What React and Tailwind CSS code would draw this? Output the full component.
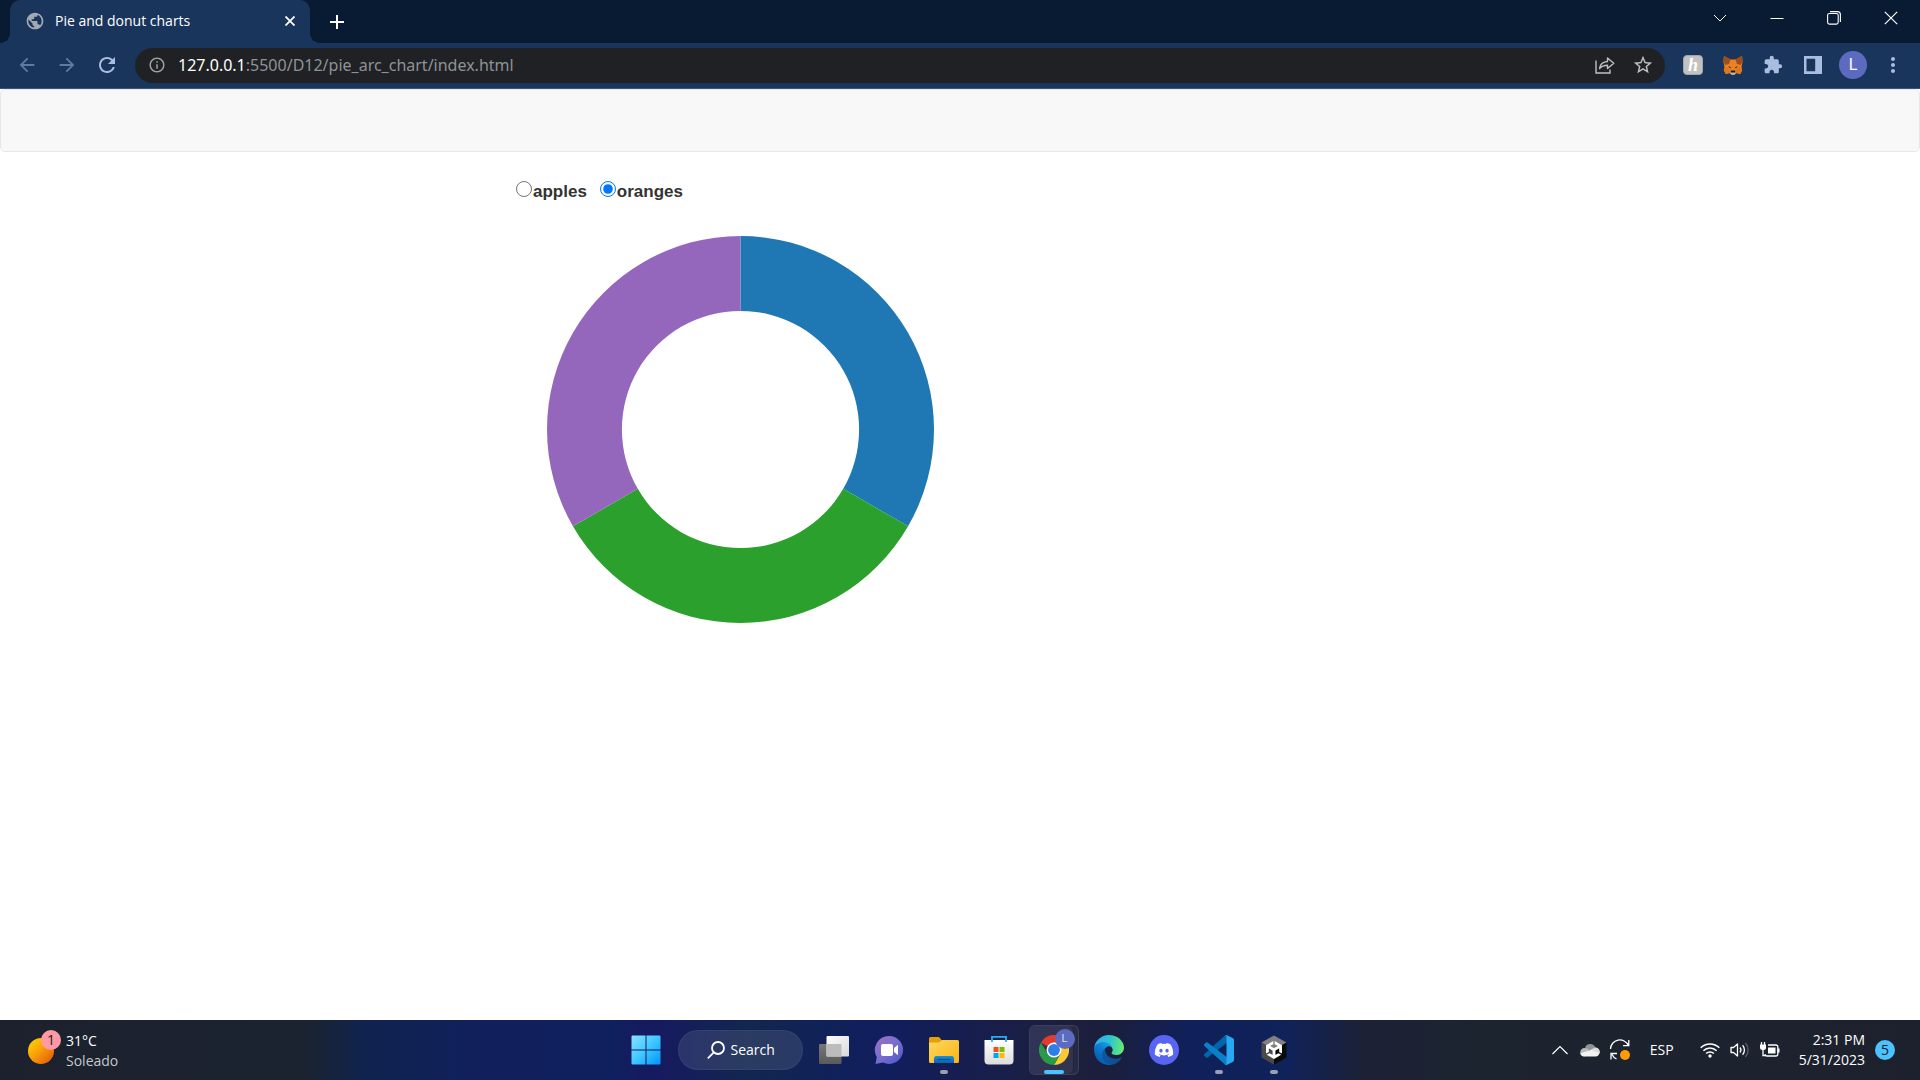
import { useState } from "react";
import {
  MdPublic,
  MdInfoOutline,
  MdStarBorder,
  MdExtension,
  MdMoreVert,
  MdRefresh,
  MdArrowBack,
  MdArrowForward,
  MdAdd,
} from "react-icons/md";
import { FaDiscord } from "react-icons/fa";
import { SiUnity } from "react-icons/si";

const UI_FONT = "font-['Open_Sans','Noto_Sans',sans-serif]";

function TabStrip() {
  return (
    <div className="flex h-[43px] items-end bg-[#091a33]">
      <span className="h-[10px] w-[10px] bg-[radial-gradient(circle_at_0_0,transparent_10px,#1a355c_10px)]" />
      <div className="flex h-full w-[300px] items-center rounded-t-[10px] bg-[#1a355c] pb-[2px] pl-[15px] pr-[10px] text-white">
        <MdPublic className="h-5 w-5 shrink-0 text-[#a3a9b2]" />
        <span className="ml-[10px] flex-1 truncate text-[14px] leading-5">Pie and donut charts</span>
        <button aria-label="Close tab" className="flex h-5 w-5 items-center justify-center">
          <svg viewBox="0 0 10 10" className="h-[10px] w-[10px]" fill="none" stroke="currentColor" strokeWidth="1.8">
            <path d="M.5.5l9 9M9.5.5l-9 9" />
          </svg>
        </button>
      </div>
      <span className="h-[10px] w-[10px] bg-[radial-gradient(circle_at_100%_0,transparent_10px,#1a355c_10px)]" />
      <button aria-label="New tab" className="ml-[6px] flex h-[43px] w-[22px] items-center justify-center text-white">
        <MdAdd className="h-6 w-6 shrink-0" />
      </button>
      <div className="ml-auto flex self-start pr-px text-white">
        <button aria-label="Search tabs" className="flex h-9 w-[57px] items-center justify-center">
          <svg viewBox="0 0 14 14" className="h-[14px] w-[14px]" fill="none" stroke="currentColor" strokeWidth="1">
            <path d="M1 4l6 6 6-6" />
          </svg>
        </button>
        <button aria-label="Minimize" className="flex h-9 w-[57px] items-center justify-center">
          <svg viewBox="0 0 14 14" className="h-[14px] w-[14px]" fill="none" stroke="currentColor" strokeWidth="1">
            <path d="M0.5 7.5h13" />
          </svg>
        </button>
        <button aria-label="Restore" className="flex h-9 w-[57px] items-center justify-center">
          <svg viewBox="0 0 14 14" className="h-[14px] w-[14px]" fill="none" stroke="currentColor" strokeWidth="1.1">
            <rect x="0.6" y="2.5" width="10.6" height="10.6" rx="1.8" />
            <path d="M3 0.6h7.4a3 3 0 0 1 3 3v7.4" />
          </svg>
        </button>
        <button aria-label="Close" className="flex h-9 w-[57px] items-center justify-center">
          <svg viewBox="0 0 14 14" className="h-[14px] w-[14px]" fill="none" stroke="currentColor" strokeWidth="1.2">
            <path d="M0.8 0.8l12.4 12.4M13.2 0.8L0.8 13.2" />
          </svg>
        </button>
      </div>
    </div>
  );
}

function FoxIcon() {
  return (
    <svg viewBox="0 0 20 20" className="h-5 w-5">
      <path d="M1 1l6.5 3.5h5L19 1l.6 5.5-1.1 5.5.7 3-1.8 4-4.4-1-1.6 1.4H8.6L7 18l-4.400 1-1.800-4 .7-3L.4 6.500z" fill="#f0801f" />
      <path d="M1 1l6.500 3.800-1.500 4.200-3.800 1L.5 6.500zM19 1l-6.500 3.800 1.500 4.200 3.800 1 1.700-3.500z" fill="#9a4f1c" />
      <path d="M.8 15l2.800-3.200 3 2.700L7 18l-4.400 1zM19.200 15l-2.800-3.200-3 2.700L13 18l4.400 1z" fill="#e2761b" />
      <path d="M5 11l3 1.300-.8 1.200zM15 11l-3 1.300.8 1.200z" fill="#233447" />
      <path d="M7 16l1.600-.6h2.800l1.600.6-.3 2.600-1.200 1.200h-3l-1.200-1.200z" fill="#c9b9aa" />
      <path d="M7.800 15.600h4.400l.3 1.800H7.500z" fill="#1c1a1a" />
    </svg>
  );
}

function Toolbar() {
  return (
    <div className="flex h-[46px] items-center border-b border-[#3d5476] bg-[#1a355c] px-[7px] pb-px text-[#a9bde0]">
      <button aria-label="Back" className="flex h-9 w-10 items-center justify-center text-[#5f7aa3]">
        <MdArrowBack className="h-[22px] w-[22px]" />
      </button>
      <button aria-label="Forward" className="flex h-9 w-10 items-center justify-center text-[#5f7aa3]">
        <MdArrowForward className="h-[22px] w-[22px]" />
      </button>
      <button aria-label="Reload" className="flex h-9 w-10 items-center justify-center">
        <MdRefresh className="h-6 w-6" />
      </button>
      <div className="ml-2 flex h-[35px] flex-1 items-center rounded-full bg-[#202124] pl-[13px] pr-1 text-[#bdc1c6]">
        <MdInfoOutline className="h-[18px] w-[18px] shrink-0 text-[#9aa0a6]" />
        <a href="#index" className="ml-3 flex-1 truncate font-['Noto_Sans','Open_Sans',sans-serif] text-[16px] leading-6 text-[#8f9398]">
          <span className="text-white">127.0.0.1</span>:5500/D12/pie_arc_chart/index.html
        </a>
        <button aria-label="Share this page" className="flex h-8 w-10 items-center justify-center">
          <svg viewBox="0 0 20 18" className="h-[18px] w-5" fill="none" stroke="currentColor" strokeWidth="1.4">
            <path d="M1 4.500v12.500h14v-3.500" />
            <path d="M4.500 12.500c.6-4.200 3.300-6.700 8-7V2l6.300 5.300-6.300 5.200V9.200c-3.500 0-6 .9-8 3.300z" strokeLinejoin="round" />
          </svg>
        </button>
        <button aria-label="Bookmark this page" className="flex h-8 w-9 items-center justify-center">
          <MdStarBorder className="h-[22px] w-[22px]" />
        </button>
      </div>
      <div className="ml-2 flex">
        <button aria-label="Honey" className="flex h-8 w-10 items-center justify-center">
          <span className="flex h-5 w-5 items-center justify-center rounded-[4px] border border-[#a5a5a5] bg-[#c2c2c2] font-['Liberation_Serif',serif] text-[18px] font-bold italic leading-[18px] text-white">
            h
          </span>
        </button>
        <button aria-label="MetaMask" className="flex h-8 w-10 items-center justify-center">
          <FoxIcon />
        </button>
        <button aria-label="Extensions" className="flex h-8 w-10 items-center justify-center">
          <MdExtension className="h-5 w-5" />
        </button>
        <button aria-label="Side panel" className="flex h-8 w-10 items-center justify-center">
          <svg viewBox="0 0 18 18" className="h-[18px] w-[18px]" fill="currentColor">
            <path fillRule="evenodd" d="M0 0h18v18H0zM2.500 2.800v12.400h8.700V2.800z" />
          </svg>
        </button>
        <button aria-label="Profile" className="flex h-8 w-10 items-center justify-center">
          <span className="flex h-7 w-7 items-center justify-center rounded-full bg-[#5c6bc0] font-[Roboto,sans-serif] text-[16px] leading-5 text-white">
            L
          </span>
        </button>
        <button aria-label="Menu" className="flex h-8 w-10 items-center justify-center">
          <MdMoreVert className="h-6 w-6" />
        </button>
      </div>
    </div>
  );
}

const COLORS = ["#1f77b4", "#2ca02c", "#9467bd"];
const DATA = { apples: [2, 1, 3], oranges: [1, 1, 1] };
const OUTER = 155;
const INNER = 95;

function arcPath(start, end) {
  const at = (angle, r) => `${r * Math.sin(angle)} ${-r * Math.cos(angle)}`;
  const large = end - start > Math.PI ? 1 : 0;
  return `M${at(start, OUTER)}A${OUTER} ${OUTER} 0 ${large} 1 ${at(end, OUTER)}L${at(end, INNER)}A${INNER} ${INNER} 0 ${large} 0 ${at(start, INNER)}Z`;
}

function Donut({ values }) {
  const total = values.reduce((a, b) => a + b, 0);
  let angle = 0;
  return (
    <svg viewBox="-155 -155 310 310" className="ml-[31px] mt-8 h-auto w-[387px]" role="img" aria-label="Donut chart">
      {values.map((v, i) => {
        const start = angle;
        angle += (v / total) * 2 * Math.PI;
        return <path key={i} d={arcPath(start, angle)} fill={COLORS[i]} />;
      })}
    </svg>
  );
}

function Page() {
  const [fruit, setFruit] = useState("oranges");
  return (
    <main className="flex-1 bg-white">
      <nav className="h-[63px] rounded-[5px] border border-[#e7e7e7] bg-[#f8f8f8]" />
      <div className="mx-auto w-full max-w-[888px] pt-[27px]">
        <form className="flex gap-[13px] font-['Liberation_Sans',Arial,sans-serif] text-[17px] font-bold leading-[25px] text-[#333]">
          {Object.keys(DATA).map((name) => (
            <label key={name} className="flex items-start gap-px">
              <input
                type="radio"
                name="fruit"
                value={name}
                checked={fruit === name}
                onChange={() => setFruit(name)}
                className="mt-[2px] h-4 w-4"
              />
              {name}
            </label>
          ))}
        </form>
        <Donut values={DATA[fruit]} />
      </div>
    </main>
  );
}

function StartIcon() {
  return (
    <svg viewBox="0 0 30 30" className="h-[30px] w-[30px]">
      <defs>
        <linearGradient id="win" x1="0" y1="0" x2="30" y2="30" gradientUnits="userSpaceOnUse">
          <stop offset="0" stopColor="#8be3ff" />
          <stop offset=".5" stopColor="#3fc8ff" />
          <stop offset="1" stopColor="#0091ff" />
        </linearGradient>
      </defs>
      <path fill="url(#win)" d="M1.500.5h13v14H.5v-13a1 1 0 0 1 1-1zM15.500.5h13a1 1 0 0 1 1 1v13h-14zM.5 15.500h14v14h-13a1 1 0 0 1-1-1zM15.500 15.500h14v13a1 1 0 0 1-1 1h-13z" />
    </svg>
  );
}

function TaskViewIcon() {
  return (
    <svg viewBox="0 0 30 28" className="h-7 w-[30px]">
      <defs>
        <linearGradient id="tv1" x1="0" y1="0" x2="1" y2="1">
          <stop offset="0" stopColor="#fff" />
          <stop offset="1" stopColor="#d9d9d9" />
        </linearGradient>
        <linearGradient id="tv2" x1="0" y1="0" x2="0" y2="1">
          <stop offset="0" stopColor="#777" />
          <stop offset="1" stopColor="#5a5a5a" />
        </linearGradient>
      </defs>
      <rect x="0" y="8" width="22.500" height="20" rx="1" fill="url(#tv2)" />
      <rect x="7.500" y="0" width="22.500" height="20.500" rx="1" fill="url(#tv1)" />
      <rect x="7.500" y="8" width="15" height="12.500" fill="#bcbcbc" />
    </svg>
  );
}

function ChatIcon() {
  return (
    <svg viewBox="0 0 30 30" className="h-[30px] w-[30px]">
      <defs>
        <linearGradient id="chat" x1="0" y1="0" x2="1" y2="1">
          <stop offset="0" stopColor="#a070b8" />
          <stop offset=".45" stopColor="#7a6fd0" />
          <stop offset="1" stopColor="#4c55c8" />
        </linearGradient>
      </defs>
      <path d="M15 1a14 14 0 1 1-6 26.600L1.500 29l1.300-7A14 14 0 0 1 15 1z" fill="url(#chat)" />
      <rect x="7" y="9" width="12" height="12" rx="2" fill="#fff" />
      <path d="M20 13l4-3.300v10.600L20 17z" fill="#fff" />
    </svg>
  );
}

function ExplorerIcon() {
  return (
    <svg viewBox="0 0 30 26" className="h-[26px] w-[30px]">
      <defs>
        <linearGradient id="fold" x1="0" y1="0" x2="1" y2="1">
          <stop offset="0" stopColor="#ffd75e" />
          <stop offset="1" stopColor="#fbb416" />
        </linearGradient>
        <linearGradient id="foldb" x1="0" y1="0" x2="0" y2="1">
          <stop offset="0" stopColor="#1a8fd6" />
          <stop offset="1" stopColor="#0a63b8" />
        </linearGradient>
      </defs>
      <path d="M0 1.500A1.500 1.500 0 0 1 1.500 0H10l3 3.500V8H0z" fill="#e3a008" />
      <path d="M0 5.500h10l3-2.500h15.500A1.500 1.500 0 0 1 30 4.500v20a1.500 1.500 0 0 1-1.500 1.500h-27A1.500 1.500 0 0 1 0 24.500z" fill="url(#fold)" />
      <path d="M5 26v-4.500A2.500 2.500 0 0 1 7.500 19h15a2.500 2.500 0 0 1 2.500 2.500V26z" fill="url(#foldb)" />
      <path d="M8.500 22.500h13" stroke="#0a4d90" strokeWidth="1.200" />
    </svg>
  );
}

function StoreIcon() {
  return (
    <svg viewBox="0 0 30 30" className="h-[30px] w-[30px]">
      <defs>
        <linearGradient id="bag" x1="0" y1="0" x2="0" y2="1">
          <stop offset="0" stopColor="#fff" />
          <stop offset="1" stopColor="#dcdcdc" />
        </linearGradient>
      </defs>
      <path d="M8 6V1.800h14V6" fill="none" stroke="#26b0ee" strokeWidth="1.800" />
      <path d="M.5 5h29v20.500a4 4 0 0 1-4 4h-21a4 4 0 0 1-4-4z" fill="url(#bag)" />
      <path d="M9.500 12H14.500v5h-5z" fill="#f25022" />
      <path d="M15.500 12h5v5h-5z" fill="#7fba00" />
      <path d="M9.500 18h5v5h-5z" fill="#00a4ef" />
      <path d="M15.500 18h5v5h-5z" fill="#ffb900" />
      <path d="M8 5v2M22 5v2" stroke="#26b0ee" strokeWidth="1.800" />
    </svg>
  );
}

function ChromeIcon() {
  return (
    <svg viewBox="0 0 48 48" className="h-[30px] w-[30px]">
      <path d="M24 24L3.200 12A24 24 0 0 1 44.800 12z" fill="#e33b2e" />
      <path d="M24 12h20.800A24 24 0 0 1 24 48l10.400-18z" fill="#fcc934" />
      <path d="M13.600 30L3.200 12A24 24 0 0 0 24 48l10.400-18L24 34z" fill="#2a9949" />
      <circle cx="24" cy="24" r="12" fill="#fff" />
      <circle cx="24" cy="24" r="9.500" fill="#2f7de9" />
    </svg>
  );
}

function EdgeIcon() {
  return (
    <svg viewBox="0 0 256 256" className="h-[30px] w-[30px]">
      <defs>
        <linearGradient id="ed1" x1="60" y1="170" x2="240" y2="170" gradientUnits="userSpaceOnUse">
          <stop offset="0" stopColor="#0c59a4" />
          <stop offset="1" stopColor="#114a8b" />
        </linearGradient>
        <linearGradient id="ed2" x1="150" y1="90" x2="45" y2="220" gradientUnits="userSpaceOnUse">
          <stop offset="0" stopColor="#1b9de2" />
          <stop offset=".5" stopColor="#0a78d0" />
          <stop offset="1" stopColor="#0b5cad" />
        </linearGradient>
        <linearGradient id="ed3" x1="0" y1="60" x2="250" y2="110" gradientUnits="userSpaceOnUse">
          <stop offset="0" stopColor="#35a9ea" />
          <stop offset=".5" stopColor="#2cc3d2" />
          <stop offset="1" stopColor="#66eb6e" />
        </linearGradient>
      </defs>
      <path fill="url(#ed1)" d="M231 190.500a93.700 93.700 0 0 1-10.500 4.700 101.900 101.900 0 0 1-35.900 6.400c-47.300 0-88.500-32.500-88.500-74.300a31.500 31.500 0 0 1 16.400-27.300c-42.800 1.800-53.800 46.400-53.800 72.500 0 73.900 68.100 81.400 82.800 81.400 7.900 0 19.800-2.300 27-4.600l1.300-.4a128.300 128.300 0 0 0 66.600-52.800 4 4 0 0 0-5.400-5.600z" />
      <path fill="url(#ed2)" d="M105.700 241.400a79.200 79.200 0 0 1-22.700-21.300 80.700 80.700 0 0 1 29.500-120c3.200-1.500 8.500-4.100 15.600-4a32.400 32.400 0 0 1 25.700 13 31.900 31.900 0 0 1 6.300 18.700c0-.2 24.500-79.600-80-79.600-43.900 0-80 41.600-80 78.200a130.200 130.200 0 0 0 12.100 56 128 128 0 0 0 156.400 67 75.500 75.500 0 0 1-62.800-8z" />
      <path fill="url(#ed3)" d="M152.300 148.900c-.9 1-3.400 2.500-3.400 5.600 0 2.600 1.700 5.200 4.800 7.300 14.300 10 41.400 8.600 41.500 8.600a59.600 59.600 0 0 0 30.300-8.300 61.400 61.400 0 0 0 30.400-52.900c.3-22.400-8-37.300-11.300-43.900C223.500 23.900 177.700 0 128 0A128 128 0 0 0 0 126.200c.5-36.500 36.800-66 80-66 3.500 0 23.500.3 42 10 16.300 8.600 24.900 18.900 30.800 29.200 6.200 10.700 7.300 24.100 7.300 29.500s-2.700 13.300-7.800 20z" />
    </svg>
  );
}

function DiscordIcon() {
  return (
    <span className="flex h-[30px] w-[30px] items-center justify-center rounded-full bg-[#5865f2] text-white">
      <FaDiscord className="h-5 w-5" />
    </span>
  );
}

function CodeIcon() {
  return (
    <svg viewBox="0 0 100 100" className="h-[30px] w-[30px]">
      <path d="M96.500 10.800L75.900.9a6.200 6.200 0 0 0-7.100 1.200L1.300 63.700a4.200 4.200 0 0 0 0 6.200l5.500 5a4.200 4.200 0 0 0 5.300.2l81.300-61.700c2.700-2 6.600-.1 6.600 3.300v-.3a6.300 6.300 0 0 0-3.500-5.600z" fill="#0065a9" />
      <path d="M96.500 89.200l-20.600 9.900a6.200 6.200 0 0 1-7.100-1.200L1.300 36.300a4.200 4.200 0 0 1 0-6.200l5.500-5a4.200 4.200 0 0 1 5.300-.2l81.300 61.700c2.700 2 6.600.1 6.600-3.300v.3a6.300 6.300 0 0 1-3.500 5.600z" fill="#0a80c8" />
      <path d="M75.900 99.100a6.200 6.200 0 0 1-7.100-1.200c2.300 2.300 6.200.7 6.200-2.600V4.700c0-3.300-3.900-4.900-6.200-2.600a6.200 6.200 0 0 1 7.100-1.200l20.600 9.900a6.200 6.200 0 0 1 3.500 5.600v67.200a6.200 6.200 0 0 1-3.500 5.600z" fill="#27a9f2" />
    </svg>
  );
}

function UnityIcon() {
  return (
    <span className="relative flex h-[30px] w-[26px] items-center justify-center text-white">
      <svg viewBox="0 0 26 30" className="absolute inset-0 h-[30px] w-[26px]">
        <path d="M13 .5l12.500 7L13 15 .5 7.500z" fill="#808080" />
        <path d="M.5 7.500L13 15v14.500L.5 22.500z" fill="#4a4a4a" />
        <path d="M25.500 7.500L13 15v14.500l12.500-7z" fill="#0a0a0a" />
      </svg>
      <SiUnity className="relative h-[18px] w-[18px]" />
    </span>
  );
}

function TaskButton({ label, running, children }) {
  return (
    <button aria-label={label} className="relative flex h-[60px] w-[55px] items-center justify-center">
      {children}
      {running && <span className="absolute inset-x-0 bottom-[6px] mx-auto h-1 w-2 rounded-full bg-[#9a9fb5]" />}
    </button>
  );
}

function Taskbar() {
  return (
    <footer className="grid h-[60px] grid-cols-[1fr_auto_1fr] items-center bg-[linear-gradient(90deg,#1c212d_0%,#1b2330_16%,#10234f_19%,#11205c_25%,#101f5e_32%,#161a60_34%,#122650_39%,#101e5e_46%,#161e50_50%,#1c1f3c_56%,#1a1f3e_58%,#10205a_62%,#10225a_67%,#1c2136_71%,#1c2430_77%,#1d212d_100%)] text-[14px] leading-5 text-white">
      <button className="flex items-center justify-self-start pl-7 pt-px text-left">
        <span className="relative h-[26px] w-[26px] rounded-full bg-[linear-gradient(135deg,#ffd000_10%,#f7990a_50%,#e2570a_95%)]">
          <span className="absolute -right-[7px] -top-2 h-5 w-5 rounded-full bg-[#ff99a4] text-center text-[14px] leading-5 text-[#222]">
            1
          </span>
        </span>
        <span className="ml-3 flex flex-col">
          <span>31°C</span>
          <span className="text-[#c5c8cd]">Soleado</span>
        </span>
      </button>

      <div className="flex items-center">
        <TaskButton label="Start"><StartIcon /></TaskButton>
        <button className="mx-1 flex h-10 w-[125px] items-center rounded-full border border-white/5 bg-white/10 pl-7">
          <svg viewBox="0 0 18 18" className="h-[18px] w-[18px]" fill="none" stroke="currentColor" strokeWidth="1.800">
            <circle cx="11" cy="7" r="6" />
            <path d="M6.800 11.300L.8 17.300" />
          </svg>
          <span className="ml-[6px]">Search</span>
        </button>
        <TaskButton label="Task view"><TaskViewIcon /></TaskButton>
        <TaskButton label="Chat"><ChatIcon /></TaskButton>
        <TaskButton label="File Explorer" running><ExplorerIcon /></TaskButton>
        <TaskButton label="Microsoft Store"><StoreIcon /></TaskButton>
        <button aria-label="Google Chrome" className="relative flex h-[60px] w-[55px] items-center justify-center">
          <span className="flex h-[50px] w-[50px] rounded-[6px] border border-white/10 bg-white/5">
            <span className="h-full w-11 rounded-[6px] border-r border-black/30 bg-white/5" />
          </span>
          <span className="absolute inset-0 flex items-center justify-center">
            <ChromeIcon />
          </span>
          <span className="absolute right-[7px] top-[9px] h-5 w-5 rounded-full bg-[#5c6bc0] text-center font-[Roboto,sans-serif] text-[11px] leading-5 text-[#d5d9f0]">
            L
          </span>
          <span className="absolute inset-x-0 bottom-[6px] mx-auto h-1 w-5 rounded-full bg-[#4cc2ff]" />
        </button>
        <TaskButton label="Microsoft Edge"><EdgeIcon /></TaskButton>
        <TaskButton label="Discord"><DiscordIcon /></TaskButton>
        <TaskButton label="Visual Studio Code" running><CodeIcon /></TaskButton>
        <TaskButton label="Unity Hub" running><UnityIcon /></TaskButton>
      </div>

      <div className="flex items-center justify-self-end pr-[25px]">
        <button aria-label="Show hidden icons" className="flex h-10 w-[30px] items-center justify-center">
          <svg viewBox="0 0 16 16" className="h-4 w-4" fill="none" stroke="currentColor" strokeWidth="1.200">
            <path d="M.5 12L8 4.500l7.500 7.500" />
          </svg>
        </button>
        <button aria-label="OneDrive" className="flex h-10 w-[30px] items-center justify-center">
          <svg viewBox="0 0 20 14" className="h-[14px] w-5">
            <path d="M5 5a5.500 5.500 0 0 1 10.400-.4L12 9z" fill="#8f9296" />
            <path d="M4.500 13.500a4.200 4.200 0 0 1 0-8.400c2 0 3.600.7 5 2z" fill="#b9bbbe" />
            <path d="M4.500 13.500c-2.500 0-4-1.500-4.200-3.200L10 7.200l5.500-2.500a4.500 4.500 0 0 1 .5 8.800z" fill="#f2f2f2" />
            <path d="M15 4.500a4.500 4.500 0 0 1 4.900 4.500v1.500L11 6.700z" fill="#dcdcdc" />
          </svg>
        </button>
        <button aria-label="Updates" className="flex h-10 w-[30px] items-center justify-center">
          <svg viewBox="0 0 22 22" className="h-[22px] w-[22px]" fill="none" stroke="currentColor" strokeWidth="1.300">
            <path d="M1.500 10a9.300 9.300 0 0 1 17.800-3.500M19.800 1v5.700h-5.700" />
            <path d="M7.500 20A9.300 9.300 0 0 1 3 15.500M2 20.500v-6h6" />
            <circle cx="16" cy="16" r="5" fill="#ff9a0a" stroke="none" />
          </svg>
        </button>
        <button className="ml-1 h-10 w-[46px] text-center">ESP</button>
        <button aria-label="Network, sound and battery" className="ml-[10px] flex h-10 items-center">
          <span className="flex w-[30px] justify-center">
            <svg viewBox="0 0 20 16" className="h-4 w-5" fill="none" stroke="currentColor" strokeWidth="1.500">
              <path d="M.7 5.800a13.200 13.200 0 0 1 18.600 0M3.400 8.700a9.300 9.300 0 0 1 13.200 0M6.100 11.500a5.500 5.500 0 0 1 7.800 0" />
              <circle cx="10" cy="14" r="1.700" fill="currentColor" stroke="none" />
            </svg>
          </span>
          <span className="flex w-[30px] justify-center">
            <svg viewBox="0 0 20 16" className="h-4 w-5" fill="none" stroke="currentColor" strokeWidth="1.300">
              <path d="M1 5.500h2.500L7.500 2v12L3.500 10.500H1z" strokeLinejoin="round" />
              <path d="M10 5.500a4 4 0 0 1 0 5M12.600 3.300a7 7 0 0 1 0 9.400" />
              <path d="M15.400 1a10.300 10.300 0 0 1 0 14" stroke="#5b6068" />
            </svg>
          </span>
          <span className="flex w-[30px] justify-center">
            <svg viewBox="0 0 20 16" className="h-4 w-5" fill="none" stroke="currentColor" strokeWidth="1.300">
              <path d="M8 3h8a1.800 1.800 0 0 1 1.800 1.800v7.400A1.800 1.800 0 0 1 16 14H7a1.800 1.800 0 0 1-1.800-1.800" />
              <rect x="8" y="5.500" width="7.500" height="6" fill="currentColor" stroke="none" />
              <path d="M18.500 6.500v4" strokeWidth="2" />
              <path d="M1.500 0v3M4.500 0v3" />
              <path d="M0 2.500h6v3A2.500 2.500 0 0 1 3.500 8h-1A2.500 2.500 0 0 1 0 5.500z" fill="currentColor" stroke="none" />
              <path d="M3 8v5.500h3" />
            </svg>
          </span>
        </button>
        <button className="ml-[14px] flex items-center">
          <span className="flex flex-col text-right">
            <span>2:31 PM</span>
            <span>5/31/2023</span>
          </span>
          <span className="ml-[10px] h-5 w-5 rounded-full bg-[#4cc2ff] text-center leading-5 text-[#10202c]">5</span>
        </button>
      </div>
    </footer>
  );
}

export default function App() {
  return (
    <div className={`flex min-h-screen flex-col bg-white ${UI_FONT}`}>
      <TabStrip />
      <Toolbar />
      <Page />
      <Taskbar />
    </div>
  );
}
